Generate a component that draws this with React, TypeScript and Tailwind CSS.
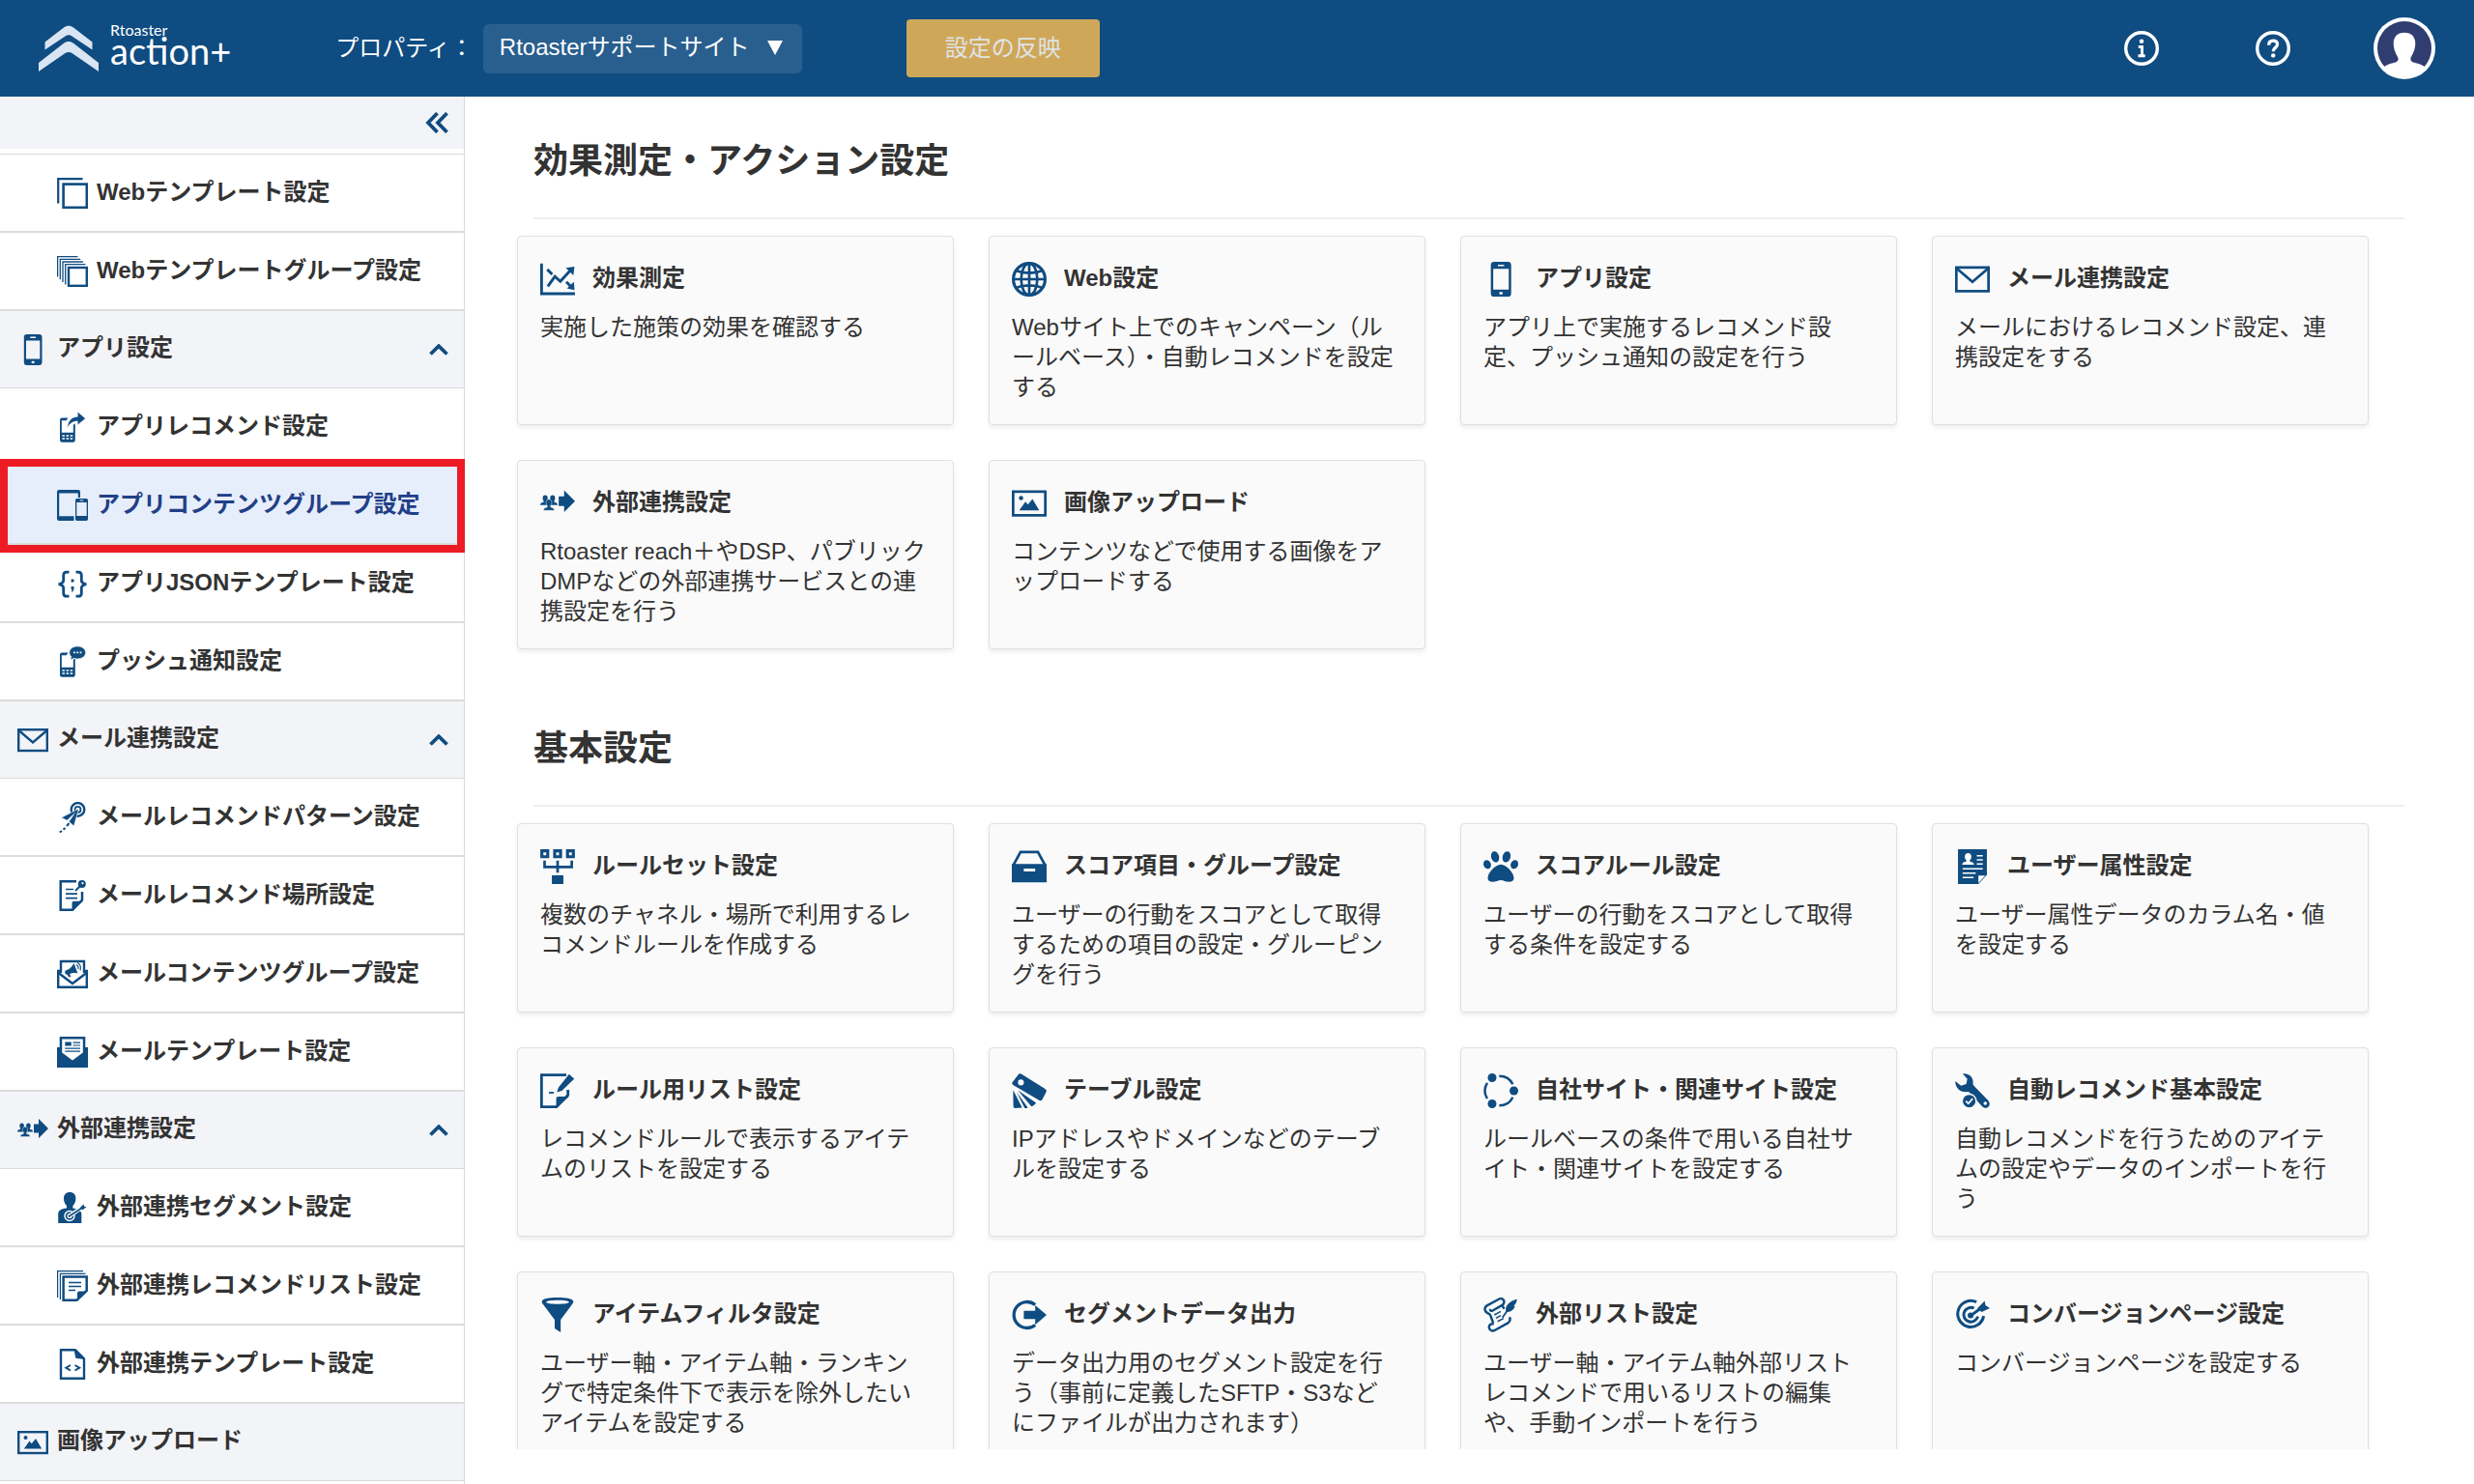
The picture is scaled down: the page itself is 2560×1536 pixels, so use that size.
import { useState } from 'react';
import type { ReactNode } from 'react';
import { FaPaw } from 'react-icons/fa';

type IconProps = {
  className?: string;
};

function Svg({ className, children }: IconProps & { children: ReactNode }) {
  return (
    <svg viewBox="0 0 32 32" fill="none" className={className} aria-hidden>
      {children}
    </svg>
  );
}

function SquaresIcon({ className }: IconProps) {
  return (
    <Svg className={className}>
      <path d="M1.2 26.5V1.2H26.5" stroke="currentColor" strokeWidth="2.2" />
      <rect x="6.6" y="6.6" width="24.2" height="24.2" stroke="currentColor" strokeWidth="2.6" />
    </Svg>
  );
}

function SquareStackIcon({ className }: IconProps) {
  return (
    <Svg className={className}>
      <path
        d="M.6 21.5V.6H21.5M3.3 24.2V3.3H24.2M6 26.9V6H26.9M8.7 29.4V8.7H29.4"
        stroke="currentColor"
        strokeWidth="1.3"
      />
      <rect x="12" y="12" width="18.8" height="18.8" stroke="currentColor" strokeWidth="2.4" />
    </Svg>
  );
}

function PhoneIcon({ className }: IconProps) {
  return (
    <Svg className={className}>
      <path
        fill="currentColor"
        fillRule="evenodd"
        d="M9.8 0h12.7a3 3 0 0 1 3 3v26a3 3 0 0 1-3 3H9.8a3 3 0 0 1-3-3V3a3 3 0 0 1 3-3ZM9 6.5v19h14.3v-19ZM13.3 2.6v1.3H19V2.6ZM14.7 27.7v2.2h2.9v-2.2Z"
      />
    </Svg>
  );
}

function KeypadPhone() {
  return (
    <>
      <path
        fill="currentColor"
        fillRule="evenodd"
        d="M5.2 6.5h6.3L9.6 9.2H4.8v12.6h12V14l2-1.8V29.5a2.2 2.2 0 0 1-2.2 2.2H5.2A2.2 2.2 0 0 1 3 29.5V8.7a2.2 2.2 0 0 1 2.2-2.2Z"
      />
      <path d="M5.4 25.1h2.6m1.5 0h2.6m1.5 0h2.6M5.4 28h2.6m1.5 0h2.6m1.5 0h2.6" stroke="#fff" strokeWidth="1.5" />
    </>
  );
}

function PhoneShareIcon({ className }: IconProps) {
  return (
    <Svg className={className}>
      <KeypadPhone />
      <path
        d="M10.5 17C11.5 9 15 5.5 21.2 5.2V0L29.5 7.2l-8.3 6.8V10C16.5 10 13.5 12 10.5 17Z"
        fill="currentColor"
        stroke="#fff"
        strokeWidth=".6"
      />
    </Svg>
  );
}

function PhoneChatIcon({ className }: IconProps) {
  return (
    <Svg className={className}>
      <KeypadPhone />
      <path
        d="M21.2 0c4.8 0 8.4 2.7 8.4 6.4s-3.6 6.5-8.4 6.5c-1.3 0-2.6-.2-3.7-.6L13.8 14l1-3.4c-1.3-1.1-2-2.6-2-4.2C12.8 2.7 16.4 0 21.2 0Z"
        fill="currentColor"
        stroke="#fff"
        strokeWidth=".6"
      />
      <path d="M17 6.4h1.8m1.5 0h1.8m1.5 0h1.8" stroke="#fff" strokeWidth="1.8" />
    </Svg>
  );
}

function DevicesIcon({ className }: IconProps) {
  return (
    <Svg className={className}>
      <path
        fill="currentColor"
        fillRule="evenodd"
        d="M2 0h20a2 2 0 0 1 2 2v6h-2.2V3.5H2.2v23.8H17.5V32H2a2 2 0 0 1-2-2V2a2 2 0 0 1 2-2Z"
      />
      <path
        fill="currentColor"
        fillRule="evenodd"
        d="M20.7 9h9.6a1.7 1.7 0 0 1 1.7 1.7v19.6a1.7 1.7 0 0 1-1.7 1.7h-9.6a1.7 1.7 0 0 1-1.7-1.7V10.7A1.7 1.7 0 0 1 20.7 9ZM20.3 13v14h10.4V13ZM23.7 10.6v1h3.6v-1Z"
      />
    </Svg>
  );
}

function BracesIcon({ className }: IconProps) {
  return (
    <Svg className={className}>
      <path
        d="M12.5 4.2H10C7.7 4.2 6.7 5.2 6.7 7.5v5c0 2.2-1.2 3.5-5 4.2 3.8.7 5 2 5 4.2v5c0 2.3 1 3.3 3.3 3.3h2.5M19.5 4.2H22c2.3 0 3.3 1 3.3 3.3v5c0 2.2 1.2 3.5 5 4.2-3.8.7-5 2-5 4.2v5c0 2.3-1 3.3-3.3 3.3h-2.5"
        stroke="currentColor"
        strokeWidth="2.8"
      />
      <path d="M14.6 11.5h2.9v2.9h-2.9ZM14.6 19h2.9v3l-1.3 2.4h-1.3l.7-2.4h-1Z" fill="currentColor" />
    </Svg>
  );
}

function MailIcon({ className }: IconProps) {
  return (
    <Svg className={className}>
      <rect x="1.2" y="5.2" width="29.6" height="21.8" stroke="currentColor" strokeWidth="2.4" />
      <path d="M1.5 6 16 18.5 30.5 6" stroke="currentColor" strokeWidth="2.4" />
    </Svg>
  );
}

function PlaneTargetIcon({ className }: IconProps) {
  return (
    <Svg className={className}>
      <circle cx="21.5" cy="7.9" r="6.8" stroke="currentColor" strokeWidth="2.4" />
      <circle cx="21.5" cy="7.9" r="3" stroke="currentColor" strokeWidth="1.8" />
      <path
        d="M22.5 7 4.5 16.2l5.8 3 8-7.5-6 8.7 5.2 4.6Z"
        fill="currentColor"
        stroke="#fff"
        strokeWidth=".6"
      />
      <path d="m12.5 22-2.5 3M8.500 27l-2 1.6M5 30l-2.300 1.500" stroke="currentColor" strokeWidth="2" />
    </Svg>
  );
}

function NotePinIcon({ className }: IconProps) {
  return (
    <Svg className={className}>
      <path d="M20 1.2H3.7V30.8H16L26 20.5V12" stroke="currentColor" strokeWidth="2.5" />
      <path d="M15.5 31.5V24c0-1.5.8-2.3 2.3-2.3H27Z" fill="currentColor" />
      <path d="M9 9.5h8m-8 4.600h12m-12 4.600h12" stroke="currentColor" strokeWidth="1.700" />
      <circle cx="25.8" cy="4" r="4" fill="currentColor" />
      <path d="m24 6-5 5" stroke="currentColor" strokeWidth="2" />
      <circle cx="26.5" cy="3.2" r="1.1" fill="#fff" />
    </Svg>
  );
}

function MailMegaphoneIcon({ className }: IconProps) {
  return (
    <Svg className={className}>
      <path d="M4 15V3h24v12M4 13H1.2v16.8h29.6V13H28" stroke="currentColor" strokeWidth="2.4" />
      <path d="m1.5 15 14.5 11L30.5 15" stroke="currentColor" strokeWidth="2.5" />
      <path
        d="M8.500 12.500c3-.5 6-2.500 9-7.500l4 10.500c-4-.8-6.500-.3-8.500.8l1.500 2.500-2.200.8-1.700-2.800c-1.800 0-3-1.300-2.100-4.300Z"
        fill="currentColor"
      />
      <path d="M20 6.500c1.600.8 2.400 2.600 2 4.600M21.200 4.500c2.600 1.400 3.800 4.600 2.800 8" stroke="currentColor" strokeWidth="1.100" />
    </Svg>
  );
}

function MailLetterIcon({ className }: IconProps) {
  return (
    <Svg className={className}>
      <path
        d="M2.7 0h26.6v11H32v21H0V11h2.7ZM5.2 2.5V16.5L16 24.5l10.8-8V2.5Z"
        fill="currentColor"
        fillRule="evenodd"
      />
      <path d="M8.3 5.5h6.5v4H8.3Z" fill="currentColor" />
      <path d="M16.5 6.2h7.5M16.5 9h7.5M8.3 12.2H24M8.3 15.2H24" stroke="currentColor" strokeWidth="1.2" />
    </Svg>
  );
}

function PeopleArrowIcon({ className }: IconProps) {
  return (
    <Svg className={className}>
      <path
        d="M4.600 8.500c1.500 0 2.300 1 2.300 2.700 0 1-.3 1.900-.8 2.400v1.200l1.500.8v2H0c0-1.600.5-2.100 3.100-2.800v-1.200c-.5-.5-.8-1.400-.8-2.400 0-1.700.8-2.700 2.300-2.700ZM11.400 8.500c-1.500 0-2.300 1-2.300 2.700 0 1 .3 1.900.8 2.400v1.200l-1.500.8v2H16c0-1.600-.5-2.100-3.100-2.800v-1.200c.5-.5.8-1.400.8-2.400 0-1.700-.8-2.700-2.300-2.700Z"
        fill="currentColor"
      />
      <path
        d="M8 12.300c1.700 0 2.600 1.100 2.600 3 0 1.200-.4 2.200-1 2.800v1.400c2.700.7 3.400 1.300 3.400 3H3c0-1.700.7-2.300 3.400-3v-1.400c-.6-.6-1-1.600-1-2.800 0-1.900.9-3 2.600-3Z"
        fill="currentColor"
        stroke="#f8f9fb"
        strokeWidth=".4"
      />
      <path d="M17 9.500h5V4l10 10-10 10v-5.500h-5Z" fill="currentColor" />
    </Svg>
  );
}

function PersonTargetIcon({ className }: IconProps) {
  return (
    <Svg className={className}>
      <path
        d="M13.2 0c4 0 6.2 2.6 6.2 6.5 0 3.4-1.5 6-3 7.500v2.600c5.500 1 8.400 2.400 8.900 5.400V32H1.200V23c0-4 2.800-5.500 8.800-6.400V14C8.500 12.500 7 9.900 7 6.500 7 2.600 9.200 0 13.200 0Z"
        fill="currentColor"
      />
      <circle cx="13" cy="24.5" r="5" stroke="#fff" strokeWidth="1.4" />
      <circle cx="13" cy="24.5" r="2" stroke="#fff" strokeWidth="1.2" />
      <path d="M13 24.500 29 13.500" stroke="#fff" strokeWidth="4" />
      <path d="M13 24.500 27 15.500" stroke="currentColor" strokeWidth="1.600" />
      <path d="m23.500 16.500 4-4.200.5 2.400 2.500.4-3.800 3.200Z" fill="currentColor" />
    </Svg>
  );
}

function NoteStackIcon({ className }: IconProps) {
  return (
    <Svg className={className}>
      <path d="M.6 28V.6H27M3.4 30V3.4H29.5" stroke="currentColor" strokeWidth="1.2" />
      <path d="M6.600 6.400H30.700V21L20.500 30.700H6.600Z" stroke="currentColor" strokeWidth="2.500" />
      <path d="M21 31v-7.500c0-1.300.8-2 2-2h8Z" fill="currentColor" />
      <path d="M12 12.500h13m-13 4h13m-13 4h7" stroke="currentColor" strokeWidth="1.600" />
    </Svg>
  );
}

function FileCodeIcon({ className }: IconProps) {
  return (
    <Svg className={className}>
      <path d="M4 1.2H18.5L28 10.5V30.8H4Z" stroke="currentColor" strokeWidth="2.400" />
      <path d="M17.500.5 19.300 9.800 28.500 11 28 9 20 .8Z" fill="currentColor" />
      <path d="m14 17-4.700 2.700L14 22.500M18.500 17l4.700 2.700-4.700 2.800" stroke="currentColor" strokeWidth="2" />
    </Svg>
  );
}

function PictureIcon({ className }: IconProps) {
  return (
    <Svg className={className}>
      <rect x="1.2" y="5.2" width="29.6" height="21.8" stroke="currentColor" strokeWidth="2.4" />
      <circle cx="8.5" cy="11" r="2" fill="currentColor" />
      <path d="M6.8 22.5 12.5 14.5l2.2 2.7L19 12l6.2 10.5Z" fill="currentColor" />
    </Svg>
  );
}

function ChartIcon({ className }: IconProps) {
  return (
    <Svg className={className}>
      <path d="M1.2 1.5V29.4H32" stroke="currentColor" strokeWidth="2.6" />
      <path d="m7 22.5 6.5-9 5 4.5L28 7.5" stroke="currentColor" strokeWidth="2.6" />
      <path d="m23.5 5.500 8-1-1 8ZM24.500 24.500l7 1.500-.5-7.500Z" fill="currentColor" />
      <path d="m6.500 7 4.500 4.500M24 18.500l4 4" stroke="currentColor" strokeWidth="2.600" />
    </Svg>
  );
}

function GlobeIcon({ className }: IconProps) {
  return (
    <Svg className={className}>
      <circle cx="16" cy="16" r="14.6" stroke="currentColor" strokeWidth="2.8" />
      <ellipse cx="16" cy="16" rx="7.4" ry="14.6" stroke="currentColor" strokeWidth="2.4" />
      <path
        d="M16 1v30M1 16h30M3.5 8c7.500 3 17.500 3 25 0M3.500 24c7.500-3 17.500-3 25 0"
        stroke="currentColor"
        strokeWidth="2.400"
      />
    </Svg>
  );
}

function RuleSetIcon({ className }: IconProps) {
  return (
    <Svg className={className}>
      <path
        d="M1.500 1.500h5.400v5.400H1.500ZM13.300 1.500h5.400v5.400h-5.400ZM25.100 1.500h5.400v5.400h-5.400Z"
        stroke="currentColor"
        strokeWidth="2.800"
      />
      <path d="M4 10.500v5.800h25v-5.800M16 10.500v11" stroke="currentColor" strokeWidth="2.400" />
      <path d="M10.700 24h10.600v8H10.700Z" fill="currentColor" />
    </Svg>
  );
}

function DrawerIcon({ className }: IconProps) {
  return (
    <Svg className={className}>
      <path d="M1.200 15 8 2.500h16L30.800 15" stroke="currentColor" strokeWidth="2.400" />
      <path d="M0 13.500h32V30.500H0ZM11 17.800v2.700h10.500v-2.700Z" fill="currentColor" fillRule="evenodd" />
    </Svg>
  );
}

function UserDocIcon({ className }: IconProps) {
  return (
    <Svg className={className}>
      <path d="M2.700 0h26.600v23.500L21.500 32H2.700Z" fill="currentColor" />
      <path
        d="M12 3.500c1.900 0 3 1.300 3 3.300 0 1.500-.6 2.700-1.400 3.300v1.200c2.700.5 3.700 1.200 3.900 3H6.500c.2-1.800 1.200-2.500 3.900-3v-1.200C9.600 9.500 9 8.300 9 6.800c0-2 1.100-3.300 3-3.300Z"
        fill="#fff"
      />
      <path d="M20 6h5.500M20 9.800h5.500M20 13.600h5.500M7 18h18.500M7 22h12M7 26h10" stroke="#fff" strokeWidth="1.300" />
      <path d="M21.500 31v-6.800h6.300Z" fill="#fff" />
    </Svg>
  );
}

function NotePencilIcon({ className }: IconProps) {
  return (
    <Svg className={className}>
      <path d="M24 1.500H1.200V30.700H15L25.500 20V15" stroke="currentColor" strokeWidth="2.500" />
      <path d="M14.700 31.500V23.500c0-1.500.8-2.200 2.200-2.200h9.600Z" fill="currentColor" />
      <path d="M26.500 0 32 5 20 16.500 14.500 18l2-5.500Z" fill="currentColor" stroke="#fafafa" strokeWidth="1" />
      <path d="M8 17.800h4.500" stroke="currentColor" strokeWidth="1.600" />
    </Svg>
  );
}

function TagFanIcon({ className }: IconProps) {
  return (
    <Svg className={className}>
      <path
        d="M6.500.5C7.300 0 8.200 0 9 .6L30.600 14.200c1.200.8 1.500 1.900.9 3.200L28 24c-.6 1.200-1.800 1.400-3 .6L1.500 10.900C.3 10.200 0 9.300.5 8.200ZM8.300 5.600a2.700 2.700 0 1 0 .1 5.400 2.700 2.700 0 0 0-.1-5.400Z"
        fill="currentColor"
        fillRule="evenodd"
      />
      <path
        d="M5.500 15.500 22.300 27c-1 1.500-2.500 2.700-4.300 3.500ZM4.300 17 14.800 31.500c-1 .4-1.800.5-3 .5ZM1.200 15.300l8.300 16.200L3.200 32c-1.200 0-1.800-.6-1.800-2Z"
        fill="currentColor"
      />
    </Svg>
  );
}

function NetworkCycleIcon({ className }: IconProps) {
  return (
    <Svg className={className}>
      <circle cx="8" cy="4" r="4" fill="currentColor" />
      <circle cx="28" cy="16" r="4" fill="currentColor" />
      <circle cx="8" cy="28" r="4" fill="currentColor" />
      <path
        d="M3.500 8.700a14 14 0 0 0 0 14.600M14.500 2.400c5.700 0 10.300 3 12.500 7.600M14.500 29.600c5.700 0 10.300-3 12.500-7.600"
        stroke="currentColor"
        strokeWidth="2.200"
      />
    </Svg>
  );
}

function WrenchCheckIcon({ className }: IconProps) {
  return (
    <Svg className={className}>
      <path
        d="M7 .3c5.500-1 10.200 3 9.500 8.700-.1 1 .2 1.800 1 2.600L30 24.500c2.300 2.400 2.200 4.600.8 6.100-1.600 1.700-4.200 1.600-6-.4L13.500 17.800c-.8-.8-1.500-1-2.600-.8C5 17.700 0 13.500.2 7l5.300 4.300 4.800-1.500 1-4.600Z"
        fill="currentColor"
      />
      <circle cx="27.800" cy="27.600" r="1.600" fill="#fafafa" />
      <circle cx="13" cy="25.500" r="6.400" fill="currentColor" stroke="#fafafa" strokeWidth="1.200" />
      <path d="m10 25.500 2.200 2.300 4-4.500" stroke="#fafafa" strokeWidth="1.600" />
    </Svg>
  );
}

function FunnelIcon({ className }: IconProps) {
  return (
    <Svg className={className}>
      <path
        d="M16 0c8 0 14.500 1.200 14.500 3.700 0 1-.5 1.700-1.300 2.700L18.800 20.500v11.500L13.300 28.500v-8L2.800 6.400C2 5.400 1.500 4.700 1.500 3.700 1.500 1.200 8 0 16 0Zm0 2.500C10 2.500 5.500 3.200 5.500 4.200S10 6 16 6s10.500-.8 10.500-1.800S22 2.500 16 2.500Z"
        fill="currentColor"
        fillRule="evenodd"
      />
    </Svg>
  );
}

function ExportIcon({ className }: IconProps) {
  return (
    <Svg className={className}>
      <path d="M21.500 6.700A12 12 0 1 0 21.500 25.300" stroke="currentColor" strokeWidth="2.900" />
      <path d="M11 12.300h10.500V7L32 16l-10.500 9v-5.300H11Z" fill="currentColor" />
    </Svg>
  );
}

function ScrollFeatherIcon({ className }: IconProps) {
  return (
    <Svg className={className}>
      <path
        d="M14.500 1.300 3.200 7.500C1 8.800.8 11.200 2.200 13c1.300 1.700 3.800 1.500 4.300 3.500L9 23.500M14.500 1.300c2.500-1 4.800.8 4.500 3.200-.2 1.500-1.200 2.300-2.500 3L8.500 12c-1.500.8-2.500 0-2.300-1.500M17.500 7.500l1.500 3M9.500 24.500c-2.500-1-4.800.8-4.200 3.500.5 2.500 3 3.200 5 2.200L22.500 23.500c2-1.200 2.500-3 1.500-5.500"
        stroke="currentColor"
        strokeWidth="2.200"
      />
      <path d="M31 1.500c-4.500 1-10.500 4-10.500 9.500l.2 2.500c4.500 0 7-2 8.300-5.500L27.800 7.500c2-1.500 2.700-3.500 3.200-6Z" fill="currentColor" />
      <path d="m22 12-4.500 6.500" stroke="currentColor" strokeWidth="1.600" />
      <path d="m10 16 6-3.200M11.500 19l4.500-2.400M13 22l5.500-2.800" stroke="currentColor" strokeWidth="1.300" />
    </Svg>
  );
}

function TargetIcon({ className }: IconProps) {
  return (
    <Svg className={className}>
      <path d="M19.700 4.200A12 12 0 1 0 26.300 17" stroke="currentColor" strokeWidth="2.700" />
      <path d="M17.500 9.800A6.600 6.600 0 1 0 21 17.500" stroke="currentColor" strokeWidth="2.600" />
      <circle cx="14.300" cy="16.500" r="2.700" fill="currentColor" />
      <path d="m14.500 16.500 10-7.200" stroke="currentColor" strokeWidth="2.600" />
      <path d="m20.500 10 6.700-7 .8 4 4 2.800-7.500 3.500Z" fill="currentColor" />
    </Svg>
  );
}

type NavItem = {
  label: string;
  icon: (props: IconProps) => ReactNode;
  active?: boolean;
};

type NavGroup = {
  label: string | null;
  icon?: (props: IconProps) => ReactNode;
  items: NavItem[];
};

const navGroups: NavGroup[] = [
  {
    label: null,
    items: [
      { label: 'Webテンプレート設定', icon: SquaresIcon },
      { label: 'Webテンプレートグループ設定', icon: SquareStackIcon },
    ],
  },
  {
    label: 'アプリ設定',
    icon: PhoneIcon,
    items: [
      { label: 'アプリレコメンド設定', icon: PhoneShareIcon },
      { label: 'アプリコンテンツグループ設定', icon: DevicesIcon, active: true },
      { label: 'アプリJSONテンプレート設定', icon: BracesIcon },
      { label: 'プッシュ通知設定', icon: PhoneChatIcon },
    ],
  },
  {
    label: 'メール連携設定',
    icon: MailIcon,
    items: [
      { label: 'メールレコメンドパターン設定', icon: PlaneTargetIcon },
      { label: 'メールレコメンド場所設定', icon: NotePinIcon },
      { label: 'メールコンテンツグループ設定', icon: MailMegaphoneIcon },
      { label: 'メールテンプレート設定', icon: MailLetterIcon },
    ],
  },
  {
    label: '外部連携設定',
    icon: PeopleArrowIcon,
    items: [
      { label: '外部連携セグメント設定', icon: PersonTargetIcon },
      { label: '外部連携レコメンドリスト設定', icon: NoteStackIcon },
      { label: '外部連携テンプレート設定', icon: FileCodeIcon },
    ],
  },
  { label: '画像アップロード', icon: PictureIcon, items: [] },
];

type CardData = {
  title: string;
  text: string;
  icon: (props: IconProps) => ReactNode;
};

const sections: { title: string; cards: CardData[] }[] = [
  {
    title: '効果測定・アクション設定',
    cards: [
      { title: '効果測定', text: '実施した施策の効果を確認する', icon: ChartIcon },
      {
        title: 'Web設定',
        text: 'Webサイト上でのキャンペーン（ルールベース）・自動レコメンドを設定する',
        icon: GlobeIcon,
      },
      { title: 'アプリ設定', text: 'アプリ上で実施するレコメンド設定、プッシュ通知の設定を行う', icon: PhoneIcon },
      { title: 'メール連携設定', text: 'メールにおけるレコメンド設定、連携設定をする', icon: MailIcon },
      {
        title: '外部連携設定',
        text: 'Rtoaster reach＋やDSP、パブリックDMPなどの外部連携サービスとの連携設定を行う',
        icon: PeopleArrowIcon,
      },
      { title: '画像アップロード', text: 'コンテンツなどで使用する画像をアップロードする', icon: PictureIcon },
    ],
  },
  {
    title: '基本設定',
    cards: [
      { title: 'ルールセット設定', text: '複数のチャネル・場所で利用するレコメンドルールを作成する', icon: RuleSetIcon },
      {
        title: 'スコア項目・グループ設定',
        text: 'ユーザーの行動をスコアとして取得するための項目の設定・グルーピングを行う',
        icon: DrawerIcon,
      },
      { title: 'スコアルール設定', text: 'ユーザーの行動をスコアとして取得する条件を設定する', icon: FaPaw },
      { title: 'ユーザー属性設定', text: 'ユーザー属性データのカラム名・値を設定する', icon: UserDocIcon },
      { title: 'ルール用リスト設定', text: 'レコメンドルールで表示するアイテムのリストを設定する', icon: NotePencilIcon },
      { title: 'テーブル設定', text: 'IPアドレスやドメインなどのテーブルを設定する', icon: TagFanIcon },
      {
        title: '自社サイト・関連サイト設定',
        text: 'ルールベースの条件で用いる自社サイト・関連サイトを設定する',
        icon: NetworkCycleIcon,
      },
      {
        title: '自動レコメンド基本設定',
        text: '自動レコメンドを行うためのアイテムの設定やデータのインポートを行う',
        icon: WrenchCheckIcon,
      },
      {
        title: 'アイテムフィルタ設定',
        text: 'ユーザー軸・アイテム軸・ランキングで特定条件下で表示を除外したいアイテムを設定する',
        icon: FunnelIcon,
      },
      {
        title: 'セグメントデータ出力',
        text: 'データ出力用のセグメント設定を行う（事前に定義したSFTP・S3などにファイルが出力されます）',
        icon: ExportIcon,
      },
      {
        title: '外部リスト設定',
        text: 'ユーザー軸・アイテム軸外部リストレコメンドで用いるリストの編集や、手動インポートを行う',
        icon: ScrollFeatherIcon,
      },
      { title: 'コンバージョンページ設定', text: 'コンバージョンページを設定する', icon: TargetIcon },
    ],
  },
];

function Logo() {
  return (
    <a href="#home" className="flex items-center gap-3 text-white" aria-label="Rtoaster action+">
      <svg viewBox="0 0 62 48" className="h-12 w-[62px]" fill="#d9e5f2" aria-hidden>
        <path d="M6.500 17.500 26 2.500c3-2.300 7-2.300 10 0l19.500 15v8L34.500 11.500c-2-1.600-5-1.600-7 0L6.500 25.500Z" />
        <path d="M0 39 26 18.800c3-2.300 7-2.300 10 0L62 39v9L34.500 29c-2-1.500-5-1.500-7 0L0 48Z" />
      </svg>
      <span className="flex flex-col pb-3 font-['Lato',sans-serif]">
        <span className="text-base leading-4">Rtoaster</span>
        <span className="text-[38px] leading-[26px]">action+</span>
      </span>
    </a>
  );
}

function Header() {
  return (
    <header className="flex h-[100px] shrink-0 items-center bg-[#0f4c81] px-10 text-white">
      <Logo />
      <div className="ml-[108px] flex items-center">
        <label htmlFor="property" className="pr-[10px] pb-px">
          プロパティ：
        </label>
        <div className="relative">
          <select
            id="property"
            className="h-[51px] w-[330px] appearance-none rounded-md bg-[#295f8f] px-[17px] pb-[2px] text-white"
          >
            <option>Rtoasterサポートサイト</option>
          </select>
          <svg
            viewBox="0 0 18 15"
            className="pointer-events-none absolute top-[17px] right-[19px] h-[15px] w-[18px]"
            fill="#fff"
            aria-hidden
          >
            <path d="M1 0h16L9 15Z" />
          </svg>
        </div>
      </div>
      <button type="button" className="ml-[108px] h-[60px] w-[200px] rounded-sm bg-[#cfa758] pb-px text-[#dfe3e6]" disabled>
        設定の反映
      </button>
      <div className="ml-auto flex items-center">
        <button type="button" aria-label="お知らせ">
          <svg viewBox="0 0 36 36" className="size-9" fill="none" aria-hidden>
            <circle cx="18" cy="18" r="16.300" stroke="#fff" strokeWidth="3.400" />
            <circle cx="18" cy="10.800" r="2.300" fill="#fff" />
            <path d="M14.800 16.500h3.700v9.300M14.500 25.800h7.200" stroke="#fff" strokeWidth="2.900" />
          </svg>
        </button>
        <button type="button" className="ml-[100px]" aria-label="ヘルプ">
          <svg viewBox="0 0 36 36" className="size-9" fill="none" aria-hidden>
            <circle cx="18" cy="18" r="16.300" stroke="#fff" strokeWidth="3.400" />
            <path
              d="M13.700 14.700c0-3 1.700-4.600 4.400-4.600s4.400 1.500 4.400 3.900c0 3.400-4.300 3.400-4.300 7.200"
              stroke="#fff"
              strokeWidth="3.300"
            />
            <circle cx="18.200" cy="25.400" r="2.200" fill="#fff" />
          </svg>
        </button>
        <button type="button" className="ml-[86px]" aria-label="アカウント">
          <svg viewBox="0 0 64 64" className="size-16" aria-hidden>
            <circle cx="32" cy="32" r="32" fill="#fff" />
            <circle cx="32" cy="32" r="28" fill="#2f3d70" />
            <path
              d="M32 15.800c7.500 0 11.300 4.500 11.300 11.300 0 6.500-3 11.500-4.800 14.900-.8 4 3 4.500 6.500 5.500 3.500 1 6.500 2 8.300 4.200C48 58 40 61 32 61s-16-3-21.300-9.300c1.800-2.200 4.800-3.200 8.300-4.200 3.500-1 7.300-1.500 6.500-5.500-1.800-3.400-4.800-8.400-4.800-14.900 0-6.800 3.800-11.300 11.300-11.300Z"
              fill="#fff"
            />
          </svg>
        </button>
      </div>
    </header>
  );
}

function SidebarGroup({ group }: { group: NavGroup }) {
  const [isOpen, setIsOpen] = useState(true);
  const GroupIcon = group.icon;

  return (
    <section>
      {group.label && GroupIcon ? (
        <button
          type="button"
          onClick={() => setIsOpen(!isOpen)}
          className="flex h-20 w-full items-center gap-[9px] border-b border-[#d9dadd] bg-[#f3f4f8] pr-4 pl-[18px] font-bold"
        >
          <GroupIcon className="size-8 shrink-0 text-[#0f4c81]" />
          <span className="pb-1">{group.label}</span>
          {group.items.length > 0 ? (
            <svg viewBox="0 0 20 12" className="ml-auto h-3 w-5" fill="none" aria-hidden>
              <path d="M1.500 10.500 10 2.200l8.500 8.300" stroke="#0f4c81" strokeWidth="3.800" />
            </svg>
          ) : null}
        </button>
      ) : null}
      {isOpen && group.items.length > 0 ? (
        <ul>
          {group.items.map((item) => (
            <li key={item.label} className="relative">
              <a
                href="#nav"
                className={
                  item.active
                    ? 'flex h-[81px] items-center gap-[9px] border-b-2 border-[#dcdcdc] bg-[#e6edfb] pl-[59px] font-bold text-[#213f87]'
                    : 'flex h-[81px] items-center gap-[9px] border-b-2 border-[#dcdcdc] pl-[59px] font-bold'
                }
              >
                <item.icon className="size-8 shrink-0 text-[#0f4c81]" />
                <span className="pb-[2px]">{item.label}</span>
              </a>
              {item.active ? (
                <div className="pointer-events-none absolute -top-2 -right-px -bottom-2 left-0 z-10 border-8 border-[#ed1c24]" />
              ) : null}
            </li>
          ))}
        </ul>
      ) : null}
    </section>
  );
}

function Sidebar() {
  return (
    <aside className="flex w-[481px] shrink-0 flex-col border-r border-[#d3d9e8] bg-white">
      <div className="flex h-[54px] shrink-0 items-center justify-end bg-[#f3f4f8] pr-4">
        <button type="button" aria-label="メニューを閉じる">
          <svg viewBox="0 0 24 22" className="h-[22px] w-6" fill="none" aria-hidden>
            <path d="M12.500 1.200 3 11l9.500 9.800M22.500 1.200 13 11l9.500 9.800" stroke="#0f4c81" strokeWidth="3.800" />
          </svg>
        </button>
      </div>
      <nav className="mt-[5px] flex-1 border-t border-[#d9d9d9]">
        {navGroups.map((group, index) => (
          <SidebarGroup key={index} group={group} />
        ))}
      </nav>
    </aside>
  );
}

function Card({ card }: { card: CardData }) {
  return (
    <a
      href="#card"
      className="flex min-h-[196px] flex-col rounded-sm border border-[#e0e0e0] bg-[#fafafa] pt-[26px] pr-[27px] pb-4 pl-[23px] shadow-[0_3px_5px_rgba(0,0,0,0.07)]"
    >
      <h3 className="flex h-9 items-center gap-[18px] font-bold">
        <card.icon className="size-9 shrink-0 text-[#0f4c81]" />
        <span className="pb-[2px]">{card.title}</span>
      </h3>
      <p className="mt-4 leading-[31px]">{card.text}</p>
    </a>
  );
}

export default function App() {
  return (
    <div
      lang="ja"
      className="flex h-screen flex-col overflow-hidden bg-white font-['Liberation_Sans','Noto_Sans_CJK_JP',sans-serif] text-2xl text-[#333]"
    >
      <Header />
      <div className="flex min-h-0 flex-1">
        <Sidebar />
        <main className="mb-9 min-w-0 flex-1 overflow-hidden pr-[72px] pl-[54px]">
          {sections.map((section) => (
            <section key={section.title} className="pb-9">
              <h2 className="ml-[17px] border-b-2 border-[#eee] pt-11 pb-[35px] text-4xl leading-[46px] font-bold">
                {section.title}
              </h2>
              <div className="mt-[17px] mr-[37px] grid grid-cols-4 gap-9">
                {section.cards.map((card) => (
                  <Card key={card.title} card={card} />
                ))}
              </div>
            </section>
          ))}
        </main>
      </div>
    </div>
  );
}
